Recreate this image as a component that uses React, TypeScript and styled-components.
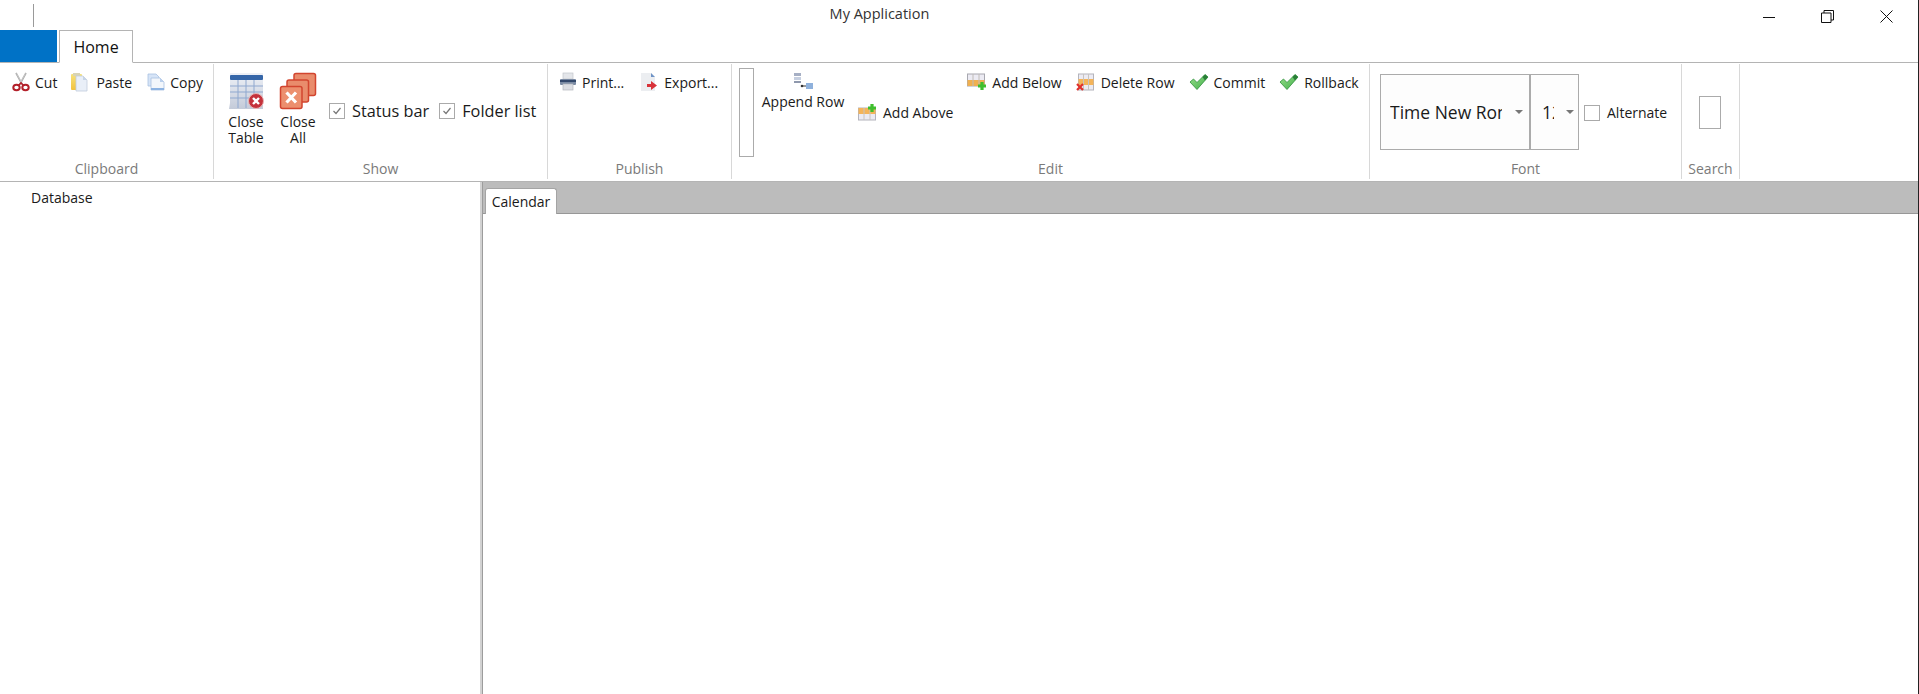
import styled, { createGlobalStyle } from "styled-components";
import type { ReactNode } from "react";

const Global = createGlobalStyle`
  html, body {
    margin: 0;
    padding: 0;
    background: #fff;
  }
  body {
    font-family: "Open Sans", "Noto Sans", sans-serif;
    color: #1a1a1a;
    overflow: hidden;
  }
`;

const Window = styled.div`
  width: 1919px;
  height: 694px;
  display: flex;
  flex-direction: column;
  overflow: hidden;
  border-right: 1px solid #222;
  box-sizing: border-box;
`;
const TitleBar = styled.div`
  height: 30px;
  display: grid;
  grid-template-columns: 1fr auto 1fr;
  align-items: center;
  flex: none;
  margin-right: -1px;
  background: #fff;
  position: relative;
  z-index: 1;
`;
const QuickAccess = styled.div`
  height: 100%;
  padding: 4px 0 3px 33px;
  box-sizing: border-box;
  > i {
    display: block;
    width: 1px;
    height: 100%;
    background: #9a9a9a;
  }
`;
const Title = styled.div`
  font-size: 14.5px;
  color: #333;
  margin-right: 160px;
  padding-bottom: 3px;
`;
const WindowButtons = styled.div`
  display: flex;
  justify-content: flex-end;
  padding-right: 3px;
`;
const WindowButton = styled.div`
  width: 59px;
  height: 30px;
  padding-top: 2px;
  box-sizing: border-box;
  display: flex;
  align-items: center;
  justify-content: center;
`;
const TabRow = styled.div`
  height: 33px;
  display: flex;
  align-items: flex-end;
  gap: 2px;
  flex: none;
  border-bottom: 1px solid #b4b4b4;
  box-sizing: border-box;
`;
const FileTab = styled.div`
  width: 57px;
  height: 32px;
  background: #0072c6;
`;
const HomeTab = styled.div`
  width: 74px;
  height: 33px;
  margin-bottom: -1px;
  box-sizing: border-box;
  border: 1px solid #b4b4b4;
  border-bottom: 1px solid #fff;
  background: #fff;
  font-size: 16px;
  display: flex;
  align-items: center;
  justify-content: center;
  color: #111;
`;
const Ribbon = styled.div`
  height: 119px;
  flex: none;
  display: flex;
  border-bottom: 1px solid #b4b4b4;
  box-sizing: border-box;
  padding-top: 1px;
`;
const GroupBox = styled.section<{ $width: number }>`
  width: ${p => p.$width}px;
  flex: none;
  box-sizing: border-box;
  border-right: 1px solid #d8d8d8;
  display: flex;
  flex-direction: column;
  margin-bottom: 2px;
`;
const GroupBody = styled.div`
  flex: 1;
  display: flex;
  min-height: 0;
`;
const GroupLabel = styled.div`
  height: 20px;
  flex: none;
  font-size: 14px;
  line-height: 20px;
  color: #7a7a7a;
  text-align: center;
`;
const Small = styled.div<{ $top?: number; $left?: number }>`
  display: flex;
  align-items: center;
  gap: 5px;
  height: 24px;
  margin-top: ${p => p.$top ?? 6}px;
  margin-left: ${p => p.$left ?? 0}px;
  font-size: 14px;
  white-space: nowrap;
  flex: none;
`;
const Large = styled.div<{ $width: number }>`
  width: ${p => p.$width}px;
  display: flex;
  flex-direction: column;
  align-items: center;
  padding-top: 8px;
  font-size: 14px;
  line-height: 16px;
  text-align: center;
  flex: none;
  > svg {
    display: block;
    margin-bottom: 4px;
  }
`;
const Row = styled.div<{ $left?: number; $gap?: number }>`
  display: flex;
  align-items: flex-start;
  padding-left: ${p => p.$left ?? 0}px;
  gap: ${p => p.$gap ?? 0}px;
`;
const Check = styled.div`
  width: 16px;
  height: 16px;
  box-sizing: border-box;
  border: 1px solid #aaa;
  background: #fff;
  flex: none;
  display: flex;
  align-items: center;
  justify-content: center;
`;
const CheckRow = styled.div<{ $size: number; $top: number; $left?: number }>`
  display: flex;
  align-items: center;
  gap: 7px;
  margin-top: ${p => p.$top}px;
  margin-left: ${p => p.$left ?? 0}px;
  font-size: ${p => p.$size}px;
  white-space: nowrap;
  flex: none;
`;
const EmptyBox = styled.div<{ $width: number; $height: number; $top: number; $left: number }>`
  width: ${p => p.$width}px;
  height: ${p => p.$height}px;
  margin: ${p => p.$top}px 0 0 ${p => p.$left}px;
  box-sizing: border-box;
  border: 1px solid #ababab;
  flex: none;
`;
const Combo = styled.div<{ $width: number }>`
  width: ${p => p.$width}px;
  height: 76px;
  margin-top: 10px;
  box-sizing: border-box;
  border: 1px solid #ababab;
  background: #fdfdfd;
  font-size: 17.5px;
  display: flex;
  align-items: center;
  flex: none;
  overflow: hidden;
  & + & {
    border-left: 2px solid #ababab;
    margin-left: -1px;
  }
`;
const ComboText = styled.div<{ $width: number; $left: number }>`
  width: ${p => p.$width}px;
  margin-left: ${p => p.$left}px;
  overflow: hidden;
  white-space: nowrap;
  flex: none;
`;
const Caret = styled.i<{ $left: number }>`
  width: 0;
  height: 0;
  margin-left: ${p => p.$left}px;
  border-left: 4px solid transparent;
  border-right: 4px solid transparent;
  border-top: 4px solid #777;
  flex: none;
`;
const Main = styled.div`
  flex: 1;
  min-height: 0;
  display: flex;
`;
const Tree = styled.div`
  width: 480px;
  flex: none;
  padding: 6px 0 0 31px;
  box-sizing: border-box;
  font-size: 14px;
  line-height: 20px;
`;
const Splitter = styled.div`
  width: 3px;
  flex: none;
  background: linear-gradient(90deg, #d2d2d2 0 2px, #9c9c9c 2px);
`;
const Documents = styled.div`
  flex: 1;
  min-width: 0;
  display: flex;
  flex-direction: column;
`;
const TabStrip = styled.div`
  height: 32px;
  flex: none;
  background: #bcbcbc;
  border-bottom: 1px solid #979797;
  box-sizing: border-box;
  display: flex;
  align-items: flex-end;
  padding-left: 2px;
`;
const DocTab = styled.div`
  width: 72px;
  height: 26px;
  margin-bottom: -1px;
  background: #fff;
  border: 1px solid #a4a4a4;
  border-bottom: none;
  border-radius: 3px 3px 0 0;
  box-sizing: border-box;
  font-size: 14px;
  line-height: 25px;
  text-align: center;
`;

function ScissorsIcon() {
  return (
    <svg width="18" height="20" viewBox="0 0 18 20">
      <path d="M4 1l6 11M14 1L8 12" stroke="#a8a8a8" strokeWidth="1.600" fill="none" />
      <path d="M4.500 1.500l5 9M13.500 1.500l-5 9" stroke="#e4e4e4" strokeWidth=".5" fill="none" />
      <ellipse cx="4.500" cy="15.500" rx="3.200" ry="2.800" fill="none" stroke="#b3202a" strokeWidth="2" />
      <ellipse cx="13.500" cy="15.500" rx="3.200" ry="2.800" fill="none" stroke="#b3202a" strokeWidth="2" />
      <path d="M6.500 13.500L9 11l2.500 2.500" stroke="#b3202a" strokeWidth="1.600" fill="none" />
    </svg>
  );
}
function PasteIcon() {
  return (
    <svg width="21" height="20" viewBox="0 0 21 20">
      <defs>
        <linearGradient id="pasteBody" x1="0" y1="0" x2="0" y2="1">
          <stop offset="0" stopColor="#f6e27d" />
          <stop offset="1" stopColor="#f2c23e" />
        </linearGradient>
      </defs>
      <rect x="1" y="2" width="11" height="16" rx="1" fill="url(#pasteBody)" />
      <path d="M3 1h7v3H3z" fill="#d9d4b4" />
      <path d="M6 4h7l4 4v11H6z" fill="#e9eff8" stroke="#c0ccdc" strokeWidth=".8" />
      <path d="M13 4v4h4z" fill="#c6d4e6" />
    </svg>
  );
}
function CopyIcon() {
  return (
    <svg width="18" height="18" viewBox="0 0 18 18">
      <path d="M1 1h8l3 3v9H1z" fill="#d6e4f7" stroke="#a9c1e2" strokeWidth=".8" />
      <path d="M4 5h9l4 4v8H4z" fill="#f2f6fb" stroke="#a9c1e2" strokeWidth=".8" />
      <path d="M13 5v4h4z" fill="#b9cfec" />
      <path d="M4 15h13v2H4z" fill="#8db3e2" />
    </svg>
  );
}
function CloseTableIcon() {
  return (
    <svg width="38" height="38" viewBox="0 0 38 38">
      <defs>
        <linearGradient id="tableBody" x1="0" y1="0" x2="0" y2="1">
          <stop offset="0" stopColor="#eef1f7" />
          <stop offset="1" stopColor="#c4cbd9" />
        </linearGradient>
      </defs>
      <path d="M2 37l1-6V1h33v36z" fill="url(#tableBody)" />
      <rect x="3" y="3" width="33" height="5" rx="1" fill="#3566a8" />
      <path d="M3 14h33M3 20h33M3 26h33M11 8v28M19 8v28M27 8v28" stroke="#8fa8cf" strokeWidth="1" />
      <circle cx="29" cy="29" r="7.500" fill="#c4323c" stroke="#e8b4b4" strokeWidth="1" />
      <path d="M26 26l6 6M32 26l-6 6" stroke="#fff" strokeWidth="2.400" />
    </svg>
  );
}
function CloseAllIcon() {
  return (
    <svg width="38" height="38" viewBox="0 0 38 38">
      <rect x="15" y="1.500" width="21.500" height="22" rx="2" fill="#e98c6c" stroke="#d2452f" strokeWidth="1.500" />
      <rect x="8" y="8" width="21.500" height="22" rx="2" fill="#e98c6c" stroke="#d2452f" strokeWidth="1.500" />
      <rect x="1.500" y="14.500" width="21.500" height="22" rx="2" fill="#ec8f6e" stroke="#d2452f" strokeWidth="1.500" />
      <path d="M7.500 20.500l9.500 10M17 20.500l-9.500 10" stroke="#fff" strokeWidth="3.200" />
    </svg>
  );
}
function PrintIcon() {
  return (
    <svg width="18" height="20" viewBox="0 0 18 20">
      <rect x="4" y="1" width="10" height="6" fill="#e4e6ea" stroke="#c2c5cb" strokeWidth=".7" />
      <rect x="1" y="7" width="16" height="6" rx="1" fill="#7a8aa3" />
      <rect x="1" y="8" width="16" height="2" fill="#33486b" />
      <rect x="4" y="12" width="10" height="6" fill="#dcdee3" stroke="#b4b7be" strokeWidth=".7" />
    </svg>
  );
}
function ExportIcon() {
  return (
    <svg width="20" height="20" viewBox="0 0 20 20">
      <path d="M2 1h10l4 4v14H2z" fill="#eceef1" />
      <path d="M12 1l4 4h-4z" fill="#6f93c6" />
      <path d="M8 12h4V9l6 4.500-6 4.500v-3H8z" fill="#d8333a" />
    </svg>
  );
}
function AppendIcon() {
  return (
    <svg width="21" height="18" viewBox="0 0 21 18">
      <rect x="1" y="1" width="7" height="3" fill="#a6afc4" />
      <rect x="1" y="5" width="7" height="3" fill="#c6cfe0" />
      <rect x="1" y="9" width="7" height="2" fill="#8f98ad" />
      <path d="M9 14h5" stroke="#333" strokeWidth="1" />
      <circle cx="9" cy="14" r="1.300" fill="#333" />
      <rect x="13" y="11" width="7" height="6" fill="#8fb1dc" />
    </svg>
  );
}
function GreenPlus({ x, y }: { x: number; y: number }) {
  return (
    <path
      d={`M${x} ${y - 4}v8M${x - 4} ${y}h8`}
      stroke="#3fbf2e"
      strokeWidth="3.200"
    />
  );
}
function AddAboveIcon() {
  return (
    <svg width="20" height="18" viewBox="0 0 20 18">
      <rect x=".5" y="5" width="17" height="12" fill="#ecebf3" stroke="#b4b4bc" />
      <rect x=".5" y="5" width="17" height="6" fill="#f4b45a" />
      <path d="M6 5v12M12 5v12" stroke="#c8c4c0" />
      <GreenPlus x={14} y={5} />
    </svg>
  );
}
function AddBelowIcon() {
  return (
    <svg width="20" height="18" viewBox="0 0 20 18">
      <rect x=".5" y="1" width="17" height="12" fill="#ecebf3" stroke="#a8a8b0" />
      <rect x=".5" y="7" width="17" height="6" fill="#f0b050" />
      <path d="M6 1v12M12 1v12" stroke="#c0bcb8" />
      <GreenPlus x={15} y={13} />
    </svg>
  );
}
function DeleteRowIcon() {
  return (
    <svg width="20" height="18" viewBox="0 0 20 18">
      <rect x="2.500" y="1" width="15" height="16" fill="#ecebf3" stroke="#b4b4bc" />
      <rect x="2.500" y="6" width="15" height="6" fill="#f4b45a" />
      <path d="M7.500 1v16M12.500 1v16" stroke="#c8c4c0" />
      <path d="M1 11l6 6M7 11l-6 6" stroke="#e0302c" strokeWidth="2.200" />
    </svg>
  );
}
function CommitIcon() {
  return (
    <svg width="20" height="16" viewBox="0 0 20 16">
      <defs>
        <linearGradient id="commitFill" x1="0" y1="0" x2="1" y2="1">
          <stop offset="0" stopColor="#9be08c" />
          <stop offset="1" stopColor="#3fae48" />
        </linearGradient>
      </defs>
      <path d="M1 8l3.500-3 3.500 3.500L16 .5l3 2.500L8 15.500z" fill="url(#commitFill)" stroke="#2f8f3c" strokeWidth=".8" />
      <path d="M16 .5l3 2.500-3 3.500-2.500-3.500z" fill="#2a8038" />
    </svg>
  );
}
function Tick() {
  return (
    <svg width="12" height="12" viewBox="0 0 12 12">
      <path d="M2.500 6l2.500 2.500L9.500 3" stroke="#777" strokeWidth="1.200" fill="none" />
    </svg>
  );
}

function Group({ width, label, children }: { width: number; label: string; children: ReactNode }) {
  return (
    <GroupBox $width={width}>
      <GroupBody>{children}</GroupBody>
      <GroupLabel>{label}</GroupLabel>
    </GroupBox>
  );
}

export default function App() {
  return (
    <Window>
      <Global />
      <TitleBar>
        <QuickAccess>
          <i />
        </QuickAccess>
        <Title>My Application</Title>
        <WindowButtons>
          <WindowButton>
            <svg width="12" height="13" viewBox="0 0 12 13">
              <path d="M0 7.500h12" stroke="#111" />
            </svg>
          </WindowButton>
          <WindowButton>
            <svg width="13" height="13" viewBox="0 0 13 13">
              <path d="M.5 3h9.500v9.500H.5zM3 3V.5h9.500V10H10" stroke="#111" fill="none" />
            </svg>
          </WindowButton>
          <WindowButton>
            <svg width="13" height="13" viewBox="0 0 13 13">
              <path d="M.5.5l12 12M12.500.5l-12 12" stroke="#111" />
            </svg>
          </WindowButton>
        </WindowButtons>
      </TitleBar>
      <TabRow>
        <FileTab />
        <HomeTab>Home</HomeTab>
      </TabRow>
      <Ribbon>
        <Group width={214} label="Clipboard">
          <Row $left={12} $gap={13}>
            <Small>
              <ScissorsIcon />
              Cut
            </Small>
            <Small>
              <PasteIcon />
              Paste
            </Small>
            <Small $left={2}>
              <CopyIcon />
              Copy
            </Small>
          </Row>
        </Group>
        <Group width={334} label="Show">
          <Row $left={7}>
            <Large $width={50}>
              <CloseTableIcon />
              Close
              <br />
              Table
            </Large>
            <Large $width={54}>
              <CloseAllIcon />
              Close
              <br />
              All
            </Large>
            <Row $left={4} $gap={10}>
              <CheckRow $size={16.3} $top={36}>
                <Check>
                  <Tick />
                </Check>
                Status bar
              </CheckRow>
              <CheckRow $size={16.3} $top={36}>
                <Check>
                  <Tick />
                </Check>
                Folder list
              </CheckRow>
            </Row>
          </Row>
        </Group>
        <Group width={184} label="Publish">
          <Row $left={11} $gap={15}>
            <Small>
              <PrintIcon />
              Print...
            </Small>
            <Small>
              <ExportIcon />
              Export...
            </Small>
          </Row>
        </Group>
        <Group width={638} label="Edit">
          <Row $left={7}>
            <EmptyBox $width={15} $height={89} $top={4} $left={0} />
            <Large $width={98}>
              <AppendIcon />
              Append Row
            </Large>
            <Row $left={6}>
              <Small $top={36}>
                <AddAboveIcon />
                Add Above
              </Small>
            </Row>
            <Row $left={14} $gap={14}>
              <Small>
                <AddBelowIcon />
                Add Below
              </Small>
              <Small>
                <DeleteRowIcon />
                Delete Row
              </Small>
              <Small>
                <CommitIcon />
                Commit
              </Small>
              <Small>
                <CommitIcon />
                Rollback
              </Small>
            </Row>
          </Row>
        </Group>
        <Group width={312} label="Font">
          <Row $left={10}>
            <Combo $width={150}>
              <ComboText $width={112} $left={9}>
                Time New Roman
              </ComboText>
              <Caret $left={13} />
            </Combo>
            <Combo $width={50}>
              <ComboText $width={12} $left={11}>
                12
              </ComboText>
              <Caret $left={12} />
            </Combo>
            <CheckRow $size={14} $top={39} $left={5}>
              <Check />
              Alternate
            </CheckRow>
          </Row>
        </Group>
        <Group width={58} label="Search">
          <EmptyBox $width={22} $height={33} $top={32} $left={17} />
        </Group>
      </Ribbon>
      <Main>
        <Tree>Database</Tree>
        <Splitter />
        <Documents>
          <TabStrip>
            <DocTab>Calendar</DocTab>
          </TabStrip>
        </Documents>
      </Main>
    </Window>
  );
}
